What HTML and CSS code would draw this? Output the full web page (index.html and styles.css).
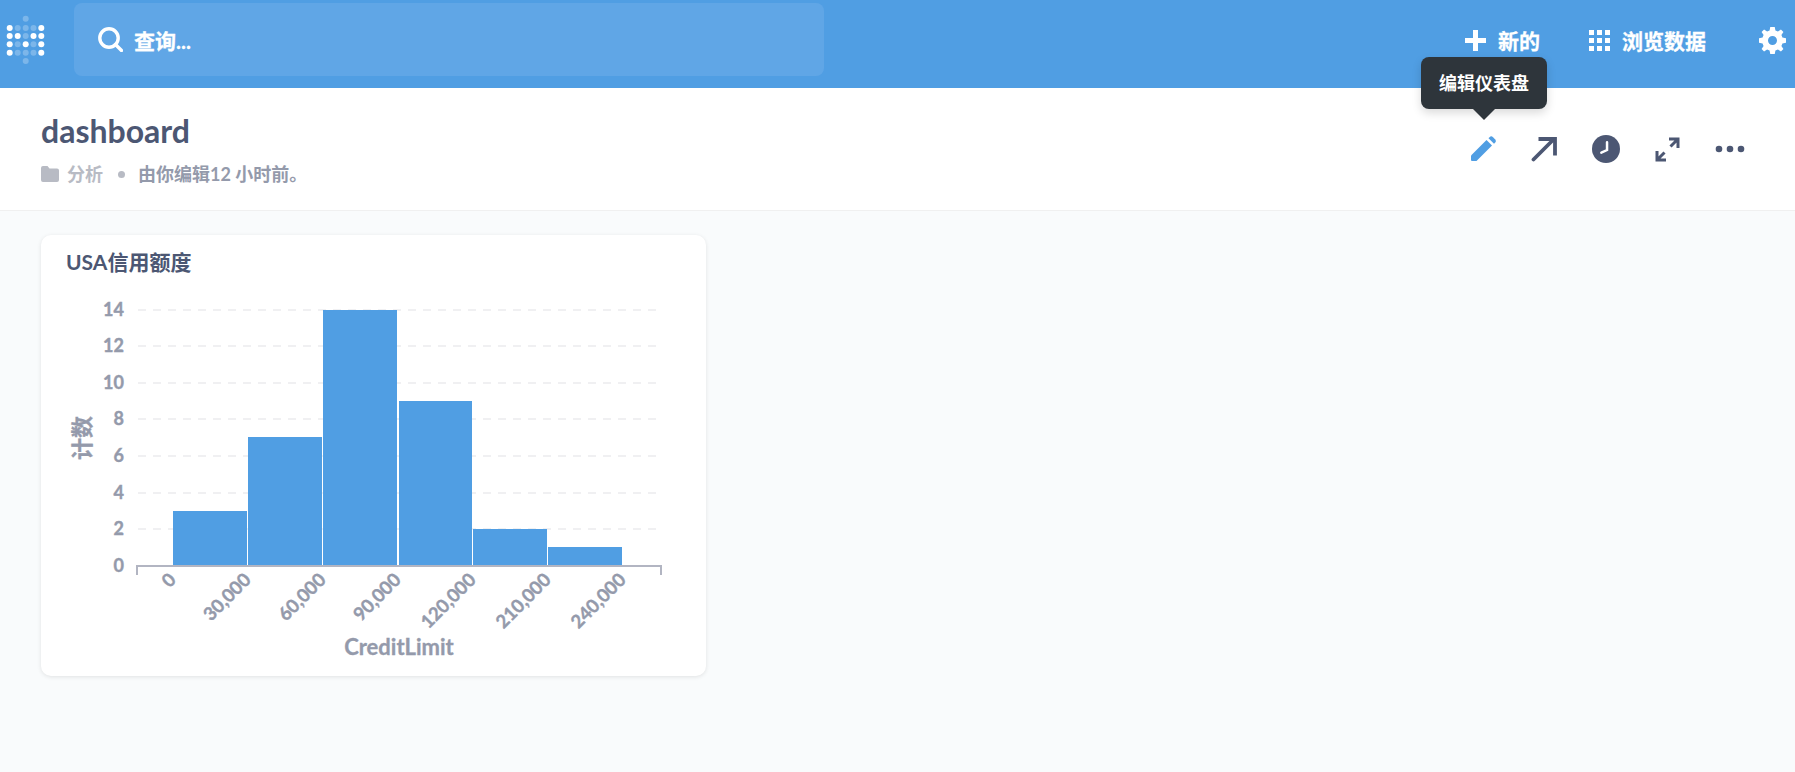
FILE: index.html
```html
<!DOCTYPE html>
<html lang="zh">
<head>
    <meta charset="UTF-8">
    <meta name="viewport" content="width=device-width, initial-scale=1.0">
    <link rel="stylesheet" href="styles.css">
    <title>dashboard</title>
</head>
<body>
    <nav class="navbar">
        <svg class="logo" width="50" height="66" viewBox="0 0 50 66">
            <g fill="#fff" fill-opacity="0.25">
                <circle cx="25.7" cy="18.7" r="3"/><circle cx="25.7" cy="61" r="3"/>
                <circle cx="17.7" cy="28" r="3"/><circle cx="25.7" cy="28" r="3"/><circle cx="33.5" cy="28" r="3"/>
                <circle cx="25.7" cy="36" r="3"/>
                <circle cx="17.7" cy="44.3" r="3"/><circle cx="33.5" cy="44.3" r="3"/>
                <circle cx="17.7" cy="52.7" r="3"/><circle cx="25.7" cy="52.7" r="3"/><circle cx="33.5" cy="52.7" r="3"/>
            </g>
            <g fill="#fff">
                <circle cx="9.7" cy="28" r="3"/><circle cx="41.3" cy="28" r="3"/>
                <circle cx="9.7" cy="36" r="3"/><circle cx="17.7" cy="36" r="3"/><circle cx="33.5" cy="36" r="3"/><circle cx="41.3" cy="36" r="3"/>
                <circle cx="9.7" cy="44.3" r="3"/><circle cx="25.7" cy="44.3" r="3"/><circle cx="41.3" cy="44.3" r="3"/>
                <circle cx="9.7" cy="52.7" r="3"/><circle cx="41.3" cy="52.7" r="3"/>
            </g>
        </svg>
        <div class="search">
            <svg width="25" height="25" viewBox="0 0 25 25" fill="none" stroke="#fff" stroke-width="3.400">
                <circle cx="11" cy="11" r="9.2"/>
                <path d="M17.5 17.5L23.5 23.5" stroke-linecap="round"/>
            </svg>
            <span>查询...</span>
        </div>
        <div class="nav-links">
            <a class="nav-link new-link">
                <svg width="21" height="21" viewBox="0 0 21 21"><path d="M8 0h5v8h8v5h-8v8H8v-8H0V8h8z" fill="#fff"/></svg>
                <span>新的</span>
            </a>
            <a class="nav-link browse-link">
                <svg width="21" height="21" viewBox="0 0 21 21" fill="#fff">
                    <rect width="5" height="5"/><rect x="8" width="5" height="5"/><rect x="16" width="5" height="5"/>
                    <rect y="8" width="5" height="5"/><rect x="8" y="8" width="5" height="5"/><rect x="16" y="8" width="5" height="5"/>
                    <rect y="16" width="5" height="5"/><rect x="8" y="16" width="5" height="5"/><rect x="16" y="16" width="5" height="5"/>
                </svg>
                <span>浏览数据</span>
            </a>
            <svg class="gear" width="27" height="27" viewBox="0 0 24 24">
                <path fill="#fff" fill-rule="evenodd" d="M10 0h4l.6 3.2c.8.2 1.500.5 2.200.9L19.500 2.300l2.200 2.200-1.800 2.700c.4.700.7 1.400.9 2.200L24 10v4l-3.200.6c-.2.800-.5 1.500-.9 2.200l1.800 2.700-2.200 2.200-2.700-1.800c-.7.4-1.400.7-2.200.9L14 24h-4l-.6-3.200c-.8-.2-1.500-.5-2.200-.9l-2.700 1.800-2.200-2.200 1.800-2.700c-.4-.7-.7-1.400-.9-2.200L0 14v-4l3.200-.6c.2-.8.500-1.500.9-2.200L2.300 4.500l2.200-2.200 2.700 1.800c.7-.4 1.400-.7 2.200-.9zM12 8a4 4 0 1 0 0 8 4 4 0 0 0 0-8z"/>
            </svg>
        </div>
    </nav>

    <header class="dash-header">
        <div class="dash-info">
            <h1>dashboard</h1>
            <div class="dash-meta">
                <svg width="18" height="16" viewBox="0 0 18 16"><path d="M0 2a2 2 0 0 1 2-2h4.500l2 2.500H16a2 2 0 0 1 2 2V14a2 2 0 0 1-2 2H2a2 2 0 0 1-2-2z" fill="#b8bbc4"/></svg>
                <span class="collection">分析</span>
                <span class="dot"></span>
                <span class="edited">由你编辑12 小时前。</span>
            </div>
        </div>
        <div class="dash-actions">
            <svg width="26" height="26" viewBox="0 0 26 26" fill="#509ee3">
                <path d="M1 19.500L16.500 4l5.500 5.500L6.500 25H2a1 1 0 0 1-1-1z"/>
                <path d="M18.500 2.200l1-1a2.500 2.500 0 0 1 3.500 0l2 2a2.500 2.500 0 0 1 0 3.500l-1 1z"/>
            </svg>
            <svg width="26" height="26" viewBox="0 0 26 26" fill="none" stroke="#4c5773" stroke-width="3.800">
                <path d="M2.500 23.500L22 4" stroke-linecap="round"/>
                <path d="M7.500 3h16.500v16.500"/>
            </svg>
            <svg width="28" height="28" viewBox="0 0 27 27">
                <circle cx="13.500" cy="13.500" r="13.500" fill="#4c5773"/>
                <path d="M14.500 7v7.500L9 17" fill="none" stroke="#fff" stroke-width="2.400" stroke-linecap="round"/>
            </svg>
            <svg width="25" height="25" viewBox="0 0 25 25" fill="none" stroke="#4c5773" stroke-width="3">
                <path d="M14 2h9v9M22.500 2.500l-7 7M11 23H2v-9M2.500 22.500l7-7"/>
            </svg>
            <svg width="30" height="8" viewBox="0 0 30 8" fill="#4c5773">
                <circle cx="4" cy="4" r="3.300"/><circle cx="15" cy="4" r="3.300"/><circle cx="26" cy="4" r="3.300"/>
            </svg>
        </div>
        <div class="tooltip">编辑仪表盘</div>
    </header>

    <main class="dash-body">
        <section class="card">
            <h2>USA信用额度</h2>
            <svg class="chart" width="665" height="387" viewBox="0 0 665 387">
                <g class="grid">
                    <line x1="97" x2="615" y1="21" y2="21"/>
                    <line x1="97" x2="615" y1="57" y2="57"/>
                    <line x1="97" x2="615" y1="94" y2="94"/>
                    <line x1="97" x2="615" y1="130" y2="130"/>
                    <line x1="97" x2="615" y1="167" y2="167"/>
                    <line x1="97" x2="615" y1="204" y2="204"/>
                    <line x1="97" x2="615" y1="240" y2="240"/>
                </g>
                <g class="bars">
                    <rect x="132" y="222" width="74" height="55"/>
                    <rect x="207" y="148" width="74" height="129"/>
                    <rect x="282" y="21" width="74" height="256"/>
                    <rect x="358" y="112" width="73" height="165"/>
                    <rect x="432" y="240" width="74" height="37"/>
                    <rect x="507" y="258" width="74" height="19"/>
                </g>
                <path class="axis" d="M96 286v-9h524v9"/>
                <g class="tick y-tick">
                    <text x="83" y="27">14</text>
                    <text x="83" y="63">12</text>
                    <text x="83" y="100">10</text>
                    <text x="83" y="136">8</text>
                    <text x="83" y="173">6</text>
                    <text x="83" y="210">4</text>
                    <text x="83" y="246">2</text>
                    <text x="83" y="283">0</text>
                </g>
                <g class="tick x-tick">
                    <text transform="translate(136 292) rotate(-45)">0</text>
                    <text transform="translate(211 292) rotate(-45)">30,000</text>
                    <text transform="translate(286 292) rotate(-45)">60,000</text>
                    <text transform="translate(361 292) rotate(-45)">90,000</text>
                    <text transform="translate(436 292) rotate(-45)">120,000</text>
                    <text transform="translate(511 292) rotate(-45)">210,000</text>
                    <text transform="translate(586 292) rotate(-45)">240,000</text>
                </g>
                <text class="axis-label" text-anchor="middle" transform="translate(49 149) rotate(-90)">计数</text>
                <text class="axis-label" text-anchor="middle" x="358" y="366">CreditLimit</text>
            </svg>
        </section>
    </main>
</body>
</html>
```

FILE: styles.css
```css
body {
    font-family: 'Lato', 'Noto Sans CJK SC', sans-serif;
    margin: 0;
    height: 772px;
    overflow: hidden;
    background-color: #f9fbfc;
    color: #4c5773;
}

.navbar {
    display: flex;
    align-items: center;
    height: 88px;
    background-color: #509ee3;
    color: #fff;
    font-weight: 700;
    font-size: 21px;
    -webkit-text-stroke: 0.3px #fff;
}

.logo {
    flex: none;
    align-self: flex-start;
    width: 50px;
    height: 66px;
    margin: 0 24px 0 0;
}

.search {
    display: flex;
    align-items: center;
    gap: 11px;
    width: 750px;
    height: 73px;
    margin-top: -9px;
    padding-left: 24px;
    box-sizing: border-box;
    background-color: #60a6e6;
    border-radius: 8px;
}

.nav-links {
    display: flex;
    align-items: center;
    margin-left: auto;
    padding-right: 9px;
    margin-top: -8px;
}

.nav-link {
    display: flex;
    align-items: center;
    gap: 12px;
}

.new-link {
    margin-right: 49px;
}

.browse-link {
    margin-right: 53px;
}

.dash-header {
    position: relative;
    display: flex;
    justify-content: space-between;
    align-items: flex-start;
    height: 122px;
    padding: 0 50px 0 41px;
    background-color: #fff;
    border-bottom: 1px solid #f0f0f0;
    box-sizing: content-box;
}

.dash-info h1 {
    margin: 25px 0 0;
    font-size: 32px;
    line-height: 36px;
    font-weight: 700;
}

.dash-meta {
    display: flex;
    align-items: center;
    margin-top: 13px;
    font-size: 18px;
    line-height: 24px;
    font-weight: 700;
}

.collection {
    margin-left: 8px;
    color: #b8bbc4;
}

.dot {
    width: 7px;
    height: 7px;
    margin: 0 13px 0 15px;
    border-radius: 50%;
    background-color: #b8bbc4;
}

.edited {
    color: #949aab;
}

.dash-actions {
    display: flex;
    align-items: center;
    gap: 35px;
    margin-top: 47px;
}

.tooltip {
    position: absolute;
    left: 1421px;
    top: -31px;
    width: 126px;
    height: 52px;
    line-height: 52px;
    text-align: center;
    font-size: 18px;
    font-weight: 700;
    color: #fff;
    background-color: #2e353b;
    border-radius: 8px;
    box-shadow: 0 4px 10px rgba(0, 0, 0, 0.15);
}

.tooltip::after {
    content: "";
    position: absolute;
    left: 52px;
    top: 52px;
    border-left: 11px solid transparent;
    border-right: 11px solid transparent;
    border-top: 11px solid #2e353b;
}

.dash-body {
    padding: 24px 41px;
}

.card {
    width: 665px;
    height: 441px;
    background-color: #fff;
    border-radius: 10px;
    box-shadow: 0 1px 4px rgba(0, 0, 0, 0.1);
}

.card h2 {
    margin: 0;
    padding: 13px 0 0 25px;
    height: 41px;
    font-size: 21px;
    line-height: 28px;
    font-weight: 700;
}

.chart {
    display: block;
}

.grid line {
    stroke: #f0f0f2;
    stroke-width: 2;
    stroke-dasharray: 8 7;
}

.bars rect {
    fill: #509ee3;
}

.axis {
    fill: none;
    stroke: #b2b5c2;
    stroke-width: 2;
}

.tick text {
    fill: #949aab;
    stroke: #949aab;
    stroke-width: 0.4px;
    font-size: 18px;
    font-weight: 700;
    text-anchor: end;
}

.x-tick text {
    font-size: 18.500px;
}

.axis-label {
    fill: #949aab;
    stroke: #949aab;
    stroke-width: 0.3px;
    font-size: 22px;
    font-weight: 700;
}
```
